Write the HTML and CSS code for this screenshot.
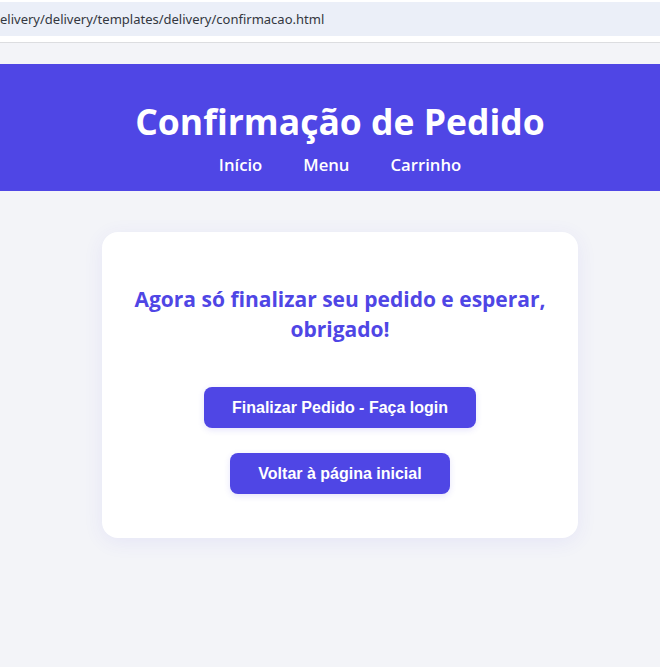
FILE: index.html
```html
<!DOCTYPE html>
<html lang="pt-BR">
<head>
<meta charset="utf-8">
<title>Confirmação de Pedido</title>
<link rel="stylesheet" href="styles.css">
</head>
<body>
<div class="browserbar">
  <div class="urlbar"><span class="url">elivery/delivery/templates/delivery/confirmacao.html</span></div>
</div>
<div class="page">
  <header class="header">
    <h1 class="title">Confirmação de Pedido</h1>
    <nav class="nav">
      <a class="nav-link" href="#">Início</a>
      <a class="nav-link" href="#">Menu</a>
      <a class="nav-link" href="#">Carrinho</a>
    </nav>
  </header>
  <main class="main">
    <section class="card">
      <h2 class="message">Agora só finalizar seu pedido e esperar, obrigado!</h2>
      <div class="actions">
        <a class="btn btn-wide" href="#">Finalizar Pedido - Faça login</a>
        <a class="btn btn-narrow" href="#">Voltar à página inicial</a>
      </div>
    </section>
  </main>
</div>
</body>
</html>
```
FILE: styles.css
```css
* { box-sizing: border-box; }
html, body { margin: 0; padding: 0; }
body {
  width: 660px;
  height: 667px;
  overflow: hidden;
  background: #f3f4f8;
  font-family: "Open Sans", "Noto Sans", sans-serif;
}
.browserbar {
  background: #ffffff;
  padding-top: 2px;
  height: 43px;
  border-bottom: 1px solid #dcdde0;
}
.urlbar {
  height: 34px;
  background: #ebeff8;
  display: flex;
  align-items: center;
}
.url {
  font-family: "Noto Sans", "Open Sans", sans-serif;
  font-size: 13px;
  color: #333740;
}
.page {
  padding-top: 21px;
}
.header {
  background: #4f46e5;
  height: 127px;
  padding-left: 20px;
  display: flex;
  flex-direction: column;
  align-items: center;
  padding-top: 33px;
}
.title {
  margin: 0;
  color: #ffffff;
  font-size: 35.5px;
  font-weight: 700;
  line-height: 48px;
}
.nav {
  display: flex;
  gap: 41px;
  margin-top: 8px;
}
.nav-link {
  color: #ffffff;
  text-decoration: none;
  font-size: 16.7px;
  font-weight: 600;
  line-height: 24px;
}
.main {
  padding: 41px 0 0 102px;
}
.card {
  width: 476px;
  height: 306px;
  background: #ffffff;
  border-radius: 16px;
  box-shadow: 0 4px 20px rgba(79, 70, 229, 0.08);
  display: flex;
  flex-direction: column;
  align-items: center;
  padding: 52px 24px 0;
}
.message {
  margin: 0;
  color: #4f46e5;
  font-size: 21px;
  font-weight: 700;
  line-height: 30px;
  text-align: center;
}
.actions {
  display: flex;
  flex-direction: column;
  align-items: center;
  gap: 25px;
  margin-top: 43px;
}
.btn {
  display: flex;
  align-items: center;
  justify-content: center;
  height: 41px;
  background: #4f46e5;
  color: #ffffff;
  border-radius: 8px;
  text-decoration: none;
  font-family: "Liberation Sans", Arial, sans-serif;
  font-weight: 700;
  font-size: 16px;
  box-shadow: 0 2px 6px rgba(79, 70, 229, 0.15);
}
.btn-wide { width: 272px; }
.btn-narrow { width: 220px; }
```
